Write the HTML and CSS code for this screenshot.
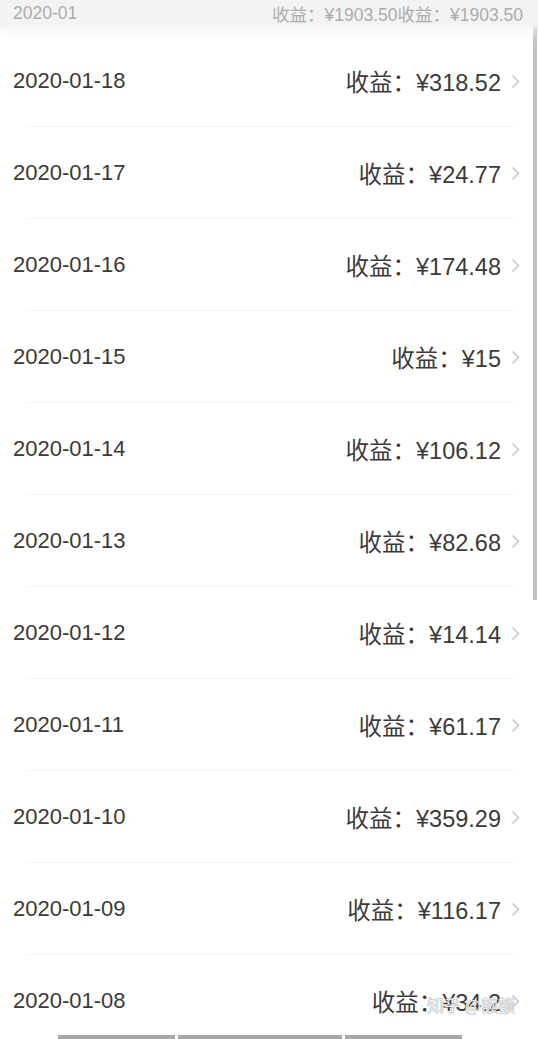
FILE: index.html
```html
<!DOCTYPE html>
<html lang="zh">
<head>
<meta charset="utf-8">
<link rel="stylesheet" href="styles.css">
</head>
<body>
<div class="page">
  <header class="month-bar">
    <span class="month">2020-01</span>
    <span class="month-total">收益：¥1903.50收益：¥1903.50</span>
  </header>
  <ul class="list">
    <li class="row"><span class="date">2020-01-18</span><span class="amount">收益：¥318.52</span><svg class="chev" viewBox="0 0 9 15"><polyline points="1.5,1.5 7.5,7.5 1.5,13.5"/></svg></li>
    <li class="row"><span class="date">2020-01-17</span><span class="amount">收益：¥24.77</span><svg class="chev" viewBox="0 0 9 15"><polyline points="1.5,1.5 7.5,7.5 1.5,13.5"/></svg></li>
    <li class="row"><span class="date">2020-01-16</span><span class="amount">收益：¥174.48</span><svg class="chev" viewBox="0 0 9 15"><polyline points="1.5,1.5 7.5,7.5 1.5,13.5"/></svg></li>
    <li class="row"><span class="date">2020-01-15</span><span class="amount">收益：¥15</span><svg class="chev" viewBox="0 0 9 15"><polyline points="1.5,1.5 7.5,7.5 1.5,13.5"/></svg></li>
    <li class="row"><span class="date">2020-01-14</span><span class="amount">收益：¥106.12</span><svg class="chev" viewBox="0 0 9 15"><polyline points="1.5,1.5 7.5,7.5 1.5,13.5"/></svg></li>
    <li class="row"><span class="date">2020-01-13</span><span class="amount">收益：¥82.68</span><svg class="chev" viewBox="0 0 9 15"><polyline points="1.5,1.5 7.5,7.5 1.5,13.5"/></svg></li>
    <li class="row"><span class="date">2020-01-12</span><span class="amount">收益：¥14.14</span><svg class="chev" viewBox="0 0 9 15"><polyline points="1.5,1.5 7.5,7.5 1.5,13.5"/></svg></li>
    <li class="row"><span class="date">2020-01-11</span><span class="amount">收益：¥61.17</span><svg class="chev" viewBox="0 0 9 15"><polyline points="1.5,1.5 7.5,7.5 1.5,13.5"/></svg></li>
    <li class="row"><span class="date">2020-01-10</span><span class="amount">收益：¥359.29</span><svg class="chev" viewBox="0 0 9 15"><polyline points="1.5,1.5 7.5,7.5 1.5,13.5"/></svg></li>
    <li class="row"><span class="date">2020-01-09</span><span class="amount">收益：¥116.17</span><svg class="chev" viewBox="0 0 9 15"><polyline points="1.5,1.5 7.5,7.5 1.5,13.5"/></svg></li>
    <li class="row"><span class="date">2020-01-08</span><span class="amount">收益：¥34.2</span><svg class="chev" viewBox="0 0 9 15"><polyline points="1.5,1.5 7.5,7.5 1.5,13.5"/></svg></li>
  </ul>
  <div class="scrollbar"></div>
  <div class="watermark">知乎 @额额</div>
  <div class="tabs">
    <span class="tab t1"></span><span class="tab t2"></span><span class="tab t3"></span>
  </div>
</div>
</body>
</html>
```
FILE: styles.css
```css
html, body {
  margin: 0;
  padding: 0;
  background: #ffffff;
}
.page {
  position: relative;
  width: 538px;
  height: 1039px;
  overflow: hidden;
  font-family: "Liberation Sans", "Noto Sans CJK SC", sans-serif;
  background: #fff;
}
.month-bar {
  display: flex;
  justify-content: space-between;
  align-items: center;
  height: 27px;
  padding: 0 15px 0 13px;
  background: #f3f3f3;
  box-shadow: 0 6px 12px #f6f6f6;
  font-size: 17.5px;
  color: #acacac;
  position: relative;
  z-index: 1;
}
.list {
  list-style: none;
  margin: 0;
  padding: 8px 0 0 0;
}
.row {
  display: flex;
  align-items: center;
  height: 92px;
  box-sizing: border-box;
  padding: 0 18px 0 13px;
  font-size: 23.5px;
  color: #3a3a3a;
  background-image: linear-gradient(#f5f5f5, #f5f5f5);
  background-repeat: no-repeat;
  background-size: 488px 1px;
  background-position: 25px 100%;
}
.date {
  flex: 1;
  font-size: 22px;
}
.amount {
  margin-right: 10px;
}
.chev {
  width: 9px;
  height: 15px;
  fill: none;
  stroke: #c9c9c9;
  stroke-width: 1.6;
}
.scrollbar {
  position: absolute;
  top: 0;
  left: 533px;
  width: 4px;
  height: 600px;
  background: #c2c2c2;
}
.watermark {
  position: absolute;
  left: 427px;
  top: 992px;
  font-size: 17px;
  color: rgba(255,255,255,0.85);
  text-shadow: 0 0 1px #9a9a9a, 0 0 1px #9a9a9a;
  font-family: "Noto Sans CJK SC", sans-serif;
}
.tabs {
  position: absolute;
  left: 58px;
  bottom: 0;
  display: flex;
  gap: 3px;
  height: 4px;
}
.tab {
  display: block;
  height: 4px;
  background: #a8a8a8;
}
.t1 { width: 117px; }
.t2 { width: 164px; }
.t3 { width: 117px; }
```
